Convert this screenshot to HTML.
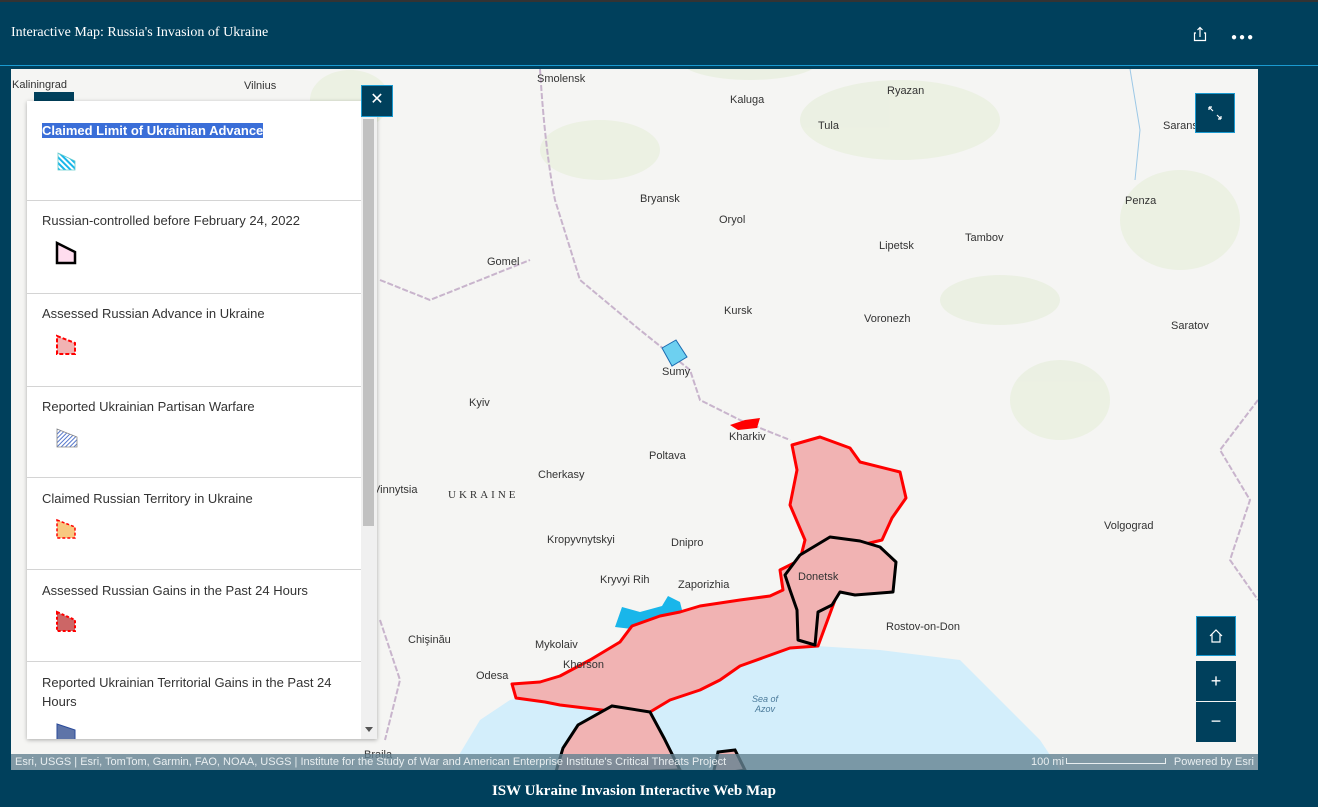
<!DOCTYPE html>
<html><head><meta charset="utf-8"><style>
*{margin:0;padding:0;box-sizing:border-box}
body{width:1318px;height:807px;background:#00405c;position:relative;overflow:hidden;font-family:"Liberation Sans",sans-serif}
.topline{position:absolute;left:0;top:0;width:1318px;height:2px;background:#333}
.title{position:absolute;left:11px;top:25px;color:#fff;font-family:"Liberation Serif",serif;font-size:14px}
.hline{position:absolute;left:0;top:65px;width:1318px;height:1px;background:#1a9ad0}
#map{position:absolute;left:11px;top:69px;width:1247px;height:701px;background:#f5f5f3;overflow:hidden}
.lbl{position:absolute;font-size:11px;color:#333}
.attr{position:absolute;left:0;bottom:0;width:1247px;height:16px;background:rgba(100,130,145,.8);color:#e8eef0;font-size:11px;line-height:16px;padding-left:4px}
.btn{position:absolute;background:#00405c;border:1px solid #1a9ad0;color:#fff;text-align:center}
#panel{position:absolute;left:27px;top:101px;width:350px;height:638px;background:#fff;box-shadow:0 1px 4px rgba(0,0,0,.3);overflow:hidden}
.sec{position:absolute;left:0;width:334px;border-bottom:1px solid #d4d4d4}
.sec p{position:absolute;left:15px;font-size:13px;color:#333;line-height:19px;width:310px}
.cap{position:absolute;left:0;top:783px;width:1268px;text-align:center;color:#fff;font-family:"Liberation Serif",serif;font-weight:bold;font-size:15px}
</style></head><body>
<div class="topline"></div>
<div class="title">Interactive Map: Russia's Invasion of Ukraine</div>
<svg style="position:absolute;left:1192px;top:26px" width="16" height="16" viewBox="0 0 16 16"><path d="M4 7H2.5v7.5h11V7H12M8 11V1.5M5.5 4L8 1.5 10.5 4" fill="none" stroke="#fff" stroke-width="1.2"/></svg>
<div style="position:absolute;left:1231px;top:32px;color:#fff;font-size:10px;letter-spacing:2px">&#9679;&#9679;&#9679;</div>
<div class="hline"></div>
<div id="map">
<svg width="1247" height="701" style="position:absolute;left:0;top:0">
<g transform="translate(-11,-69)">
<g fill="#e3edd6" opacity=".55">
<ellipse cx="600" cy="150" rx="60" ry="30"/><ellipse cx="900" cy="120" rx="100" ry="40"/><ellipse cx="1180" cy="220" rx="60" ry="50"/><ellipse cx="350" cy="100" rx="40" ry="30"/><ellipse cx="1000" cy="300" rx="60" ry="25"/><ellipse cx="750" cy="60" rx="70" ry="20"/><ellipse cx="1060" cy="400" rx="50" ry="40"/>
</g>
<path d="M540 69 Q545 150 555 200 L580 280 L640 330 L690 370 L700 400 L740 420 L790 440" fill="none" stroke="#c8b4cc" stroke-width="2" stroke-dasharray="6 2"/>
<path d="M380 280 L430 300 L530 260" fill="none" stroke="#c8b4cc" stroke-width="2" stroke-dasharray="6 2"/>
<path d="M1258 400 L1220 450 L1250 500 L1230 560 L1258 600" fill="none" stroke="#c8b4cc" stroke-width="2" stroke-dasharray="6 2"/>
<path d="M380 620 L400 680 L385 740" fill="none" stroke="#c8b4cc" stroke-width="2" stroke-dasharray="6 2"/>
<path d="M1130 69 L1140 130 L1135 180" fill="none" stroke="#9cc8e6" stroke-width="1"/>
<path d="M450 770 L480 720 L510 700 L560 690 L620 660 L700 665 L760 650 L800 645 L880 650 L960 660 L1000 700 L1040 740 L1060 770 Z" fill="#d3eefb"/>
<path d="M615 627 L622 607 L640 612 L662 606 L668 596 L680 602 L684 618 L660 624 L640 630 Z" fill="#19b6ea"/>
<path d="M792 445 L820 437 L850 448 L860 462 L900 472 L906 498 L892 518 L882 540 L800 560 L780 570 L783 590 L770 596 L740 600 L700 606 L680 612 L660 616 L632 626 L620 642 L590 660 L560 676 L540 682 L512 684 L516 698 L545 702 L560 705 L610 711 L650 712 L670 700 L700 690 L720 680 L740 666 L790 648 L818 646 L835 600 L800 560 L805 540 L790 505 L797 470 Z" fill="#f1b3b3" stroke="#f00" stroke-width="3" stroke-linejoin="round"/>
<path d="M800 555 L830 537 L860 541 L880 547 L896 562 L893 592 L855 595 L840 592 L832 605 L818 612 L815 645 L798 640 L797 610 L790 590 L785 575 Z" fill="#f1b3b3" stroke="#000" stroke-width="3" stroke-linejoin="round"/>
<path d="M555 775 L563 748 L578 725 L612 706 L650 712 L664 738 L680 770 Z" fill="#f1b3b3" stroke="#000" stroke-width="3"/>
<path d="M713 775 L718 752 L735 750 L745 770 Z" fill="#f1b3b3" stroke="#000" stroke-width="3"/>
<path d="M662 348 L676 340 L687 357 L672 366 Z" fill="#6dd0f0" stroke="#1a6ab0" stroke-width="1"/>
<path d="M730 425 L745 420 L760 418 L757 428 L738 430 Z" fill="#f00"/>
</g>
</svg>
<div class="lbl" style="left:1px;top:10px">Kaliningrad</div>
<div class="lbl" style="left:233px;top:11px">Vilnius</div>
<div class="lbl" style="left:526px;top:4px">Smolensk</div>
<div class="lbl" style="left:719px;top:25px">Kaluga</div>
<div class="lbl" style="left:876px;top:16px">Ryazan</div>
<div class="lbl" style="left:807px;top:51px">Tula</div>
<div class="lbl" style="left:1152px;top:51px">Saransk</div>
<div class="lbl" style="left:629px;top:124px">Bryansk</div>
<div class="lbl" style="left:708px;top:145px">Oryol</div>
<div class="lbl" style="left:1114px;top:126px">Penza</div>
<div class="lbl" style="left:954px;top:163px">Tambov</div>
<div class="lbl" style="left:868px;top:171px">Lipetsk</div>
<div class="lbl" style="left:476px;top:187px">Gomel</div>
<div class="lbl" style="left:713px;top:236px">Kursk</div>
<div class="lbl" style="left:853px;top:244px">Voronezh</div>
<div class="lbl" style="left:1160px;top:251px">Saratov</div>
<div class="lbl" style="left:651px;top:297px">Sumy</div>
<div class="lbl" style="left:458px;top:328px">Kyiv</div>
<div class="lbl" style="left:718px;top:362px">Kharkiv</div>
<div class="lbl" style="left:638px;top:381px">Poltava</div>
<div class="lbl" style="left:527px;top:400px">Cherkasy</div>
<div class="lbl" style="left:362px;top:415px">Vinnytsia</div>
<div class="lbl" style="left:437px;top:420px;font-family:'Liberation Serif',serif;letter-spacing:3px">UKRAINE</div>
<div class="lbl" style="left:1093px;top:451px">Volgograd</div>
<div class="lbl" style="left:536px;top:465px">Kropyvnytskyi</div>
<div class="lbl" style="left:660px;top:468px">Dnipro</div>
<div class="lbl" style="left:589px;top:505px">Kryvyi Rih</div>
<div class="lbl" style="left:667px;top:510px">Zaporizhia</div>
<div class="lbl" style="left:787px;top:502px">Donetsk</div>
<div class="lbl" style="left:875px;top:552px">Rostov-on-Don</div>
<div class="lbl" style="left:397px;top:565px">Chişinău</div>
<div class="lbl" style="left:524px;top:570px">Mykolaiv</div>
<div class="lbl" style="left:552px;top:590px">Kherson</div>
<div class="lbl" style="left:465px;top:601px">Odesa</div>
<div class="lbl" style="left:741px;top:625px;font-style:italic;font-size:9px;color:#4a7a9a;text-align:center">Sea of<br>Azov</div>
<div class="lbl" style="left:353px;top:680px">Braila</div>
<div class="attr">Esri, USGS | Esri, TomTom, Garmin, FAO, NOAA, USGS | Institute for the Study of War and American Enterprise Institute's Critical Threats Project<span style="position:absolute;left:1020px">100 mi</span><span style="position:absolute;left:1055px;top:4px;width:100px;height:6px;border:1px solid #e8eef0;border-top:none"></span><span style="position:absolute;right:4px">Powered by Esri</span></div>
<div class="btn" style="left:1184px;top:24px;width:40px;height:40px"><svg width="38" height="38" viewBox="0 0 38 38"><path d="M13 13l4 4M13 13v3M13 13h3M25 25l-4-4M25 25v-3M25 25h-3" stroke="#fff" stroke-width="1.2" fill="none"/></svg></div>
<div class="btn" style="left:1185px;top:547px;width:40px;height:40px"><svg width="38" height="38" viewBox="0 0 38 38"><path d="M13 19l6-6 6 6M15 17v8h8v-8" stroke="#fff" stroke-width="1.2" fill="none"/></svg></div>
<div class="btn" style="left:1185px;top:592px;width:40px;height:40px;border-color:#00405c;line-height:38px;font-size:18px">+</div>
<div class="btn" style="left:1185px;top:633px;width:40px;height:40px;border-color:#00405c;line-height:36px;font-size:18px">−</div>
</div>
<div class="btn" style="left:34px;top:92px;width:40px;height:9px;border:none"></div>
<div id="panel">
<div class="sec" style="top:0;height:100px"><p style="top:20px"><span style="background:#3a6ed8;color:#fff;font-weight:bold">Claimed Limit of Ukrainian Advance</span></p>
<svg style="position:absolute;left:30px;top:51px" width="20" height="20"><defs><pattern id="h1" width="4" height="4" patternUnits="userSpaceOnUse" patternTransform="rotate(-45)"><rect width="2" height="4" fill="#19b6ea"/></pattern></defs><path d="M1 1L18 9V18H1Z" fill="url(#h1)" stroke="#6cc" stroke-width=".8"/></svg></div>
<div class="sec" style="top:100px;height:93px"><p style="top:10px">Russian-controlled before February 24, 2022</p>
<svg style="position:absolute;left:28px;top:40px" width="28" height="26"><path d="M2 2L20 11V22H2Z" fill="#fde" stroke="#000" stroke-width="2.5"/></svg></div>
<div class="sec" style="top:193px;height:93px"><p style="top:10px">Assessed Russian Advance in Ukraine</p>
<svg style="position:absolute;left:28px;top:40px" width="28" height="26"><path d="M2 2L20 9V20H2Z" fill="#f1b3b3" stroke="#f00" stroke-width="2" stroke-dasharray="4 2"/></svg></div>
<div class="sec" style="top:286px;height:91px"><p style="top:10px">Reported Ukrainian Partisan Warfare</p>
<svg style="position:absolute;left:28px;top:40px" width="28" height="26"><defs><pattern id="h2" width="3" height="3" patternUnits="userSpaceOnUse" patternTransform="rotate(45)"><rect width="1" height="3" fill="#5577cc"/></pattern></defs><path d="M2 2L22 10V20H2Z" fill="url(#h2)" stroke="#888" stroke-width=".8"/></svg></div>
<div class="sec" style="top:377px;height:92px"><p style="top:11px">Claimed Russian Territory in Ukraine</p>
<svg style="position:absolute;left:28px;top:40px" width="28" height="26"><path d="M2 2L20 9V20H2Z" fill="#f8c880" stroke="#f00" stroke-width="1.5" stroke-dasharray="3 2"/></svg></div>
<div class="sec" style="top:469px;height:92px"><p style="top:11px">Assessed Russian Gains in the Past 24 Hours</p>
<svg style="position:absolute;left:28px;top:40px" width="28" height="26"><path d="M2 2L20 10V21H2Z" fill="#cc6666" stroke="#f00" stroke-width="2" stroke-dasharray="3 2"/></svg></div>
<div class="sec" style="top:561px;height:100px;border:none"><p style="top:11px">Reported Ukrainian Territorial Gains in the Past 24 Hours</p>
<svg style="position:absolute;left:28px;top:60px" width="28" height="26"><path d="M2 2L20 8V20H2Z" fill="#5e74a8" stroke="#2a4a9a" stroke-width="1"/></svg></div>
<div style="position:absolute;left:334px;top:0;width:16px;height:638px;background:#f0f0f0"></div>
<div style="position:absolute;left:336px;top:18px;width:11px;height:407px;background:#c1c1c1"></div>
<div style="position:absolute;left:338px;top:626px;width:0;height:0;border:4px solid transparent;border-top:5px solid #555"></div>
</div>
<div class="btn" style="left:361px;top:85px;width:32px;height:32px;line-height:28px;font-size:16px">✕</div>
<div class="cap">ISW Ukraine Invasion Interactive Web Map</div>
</body></html>
